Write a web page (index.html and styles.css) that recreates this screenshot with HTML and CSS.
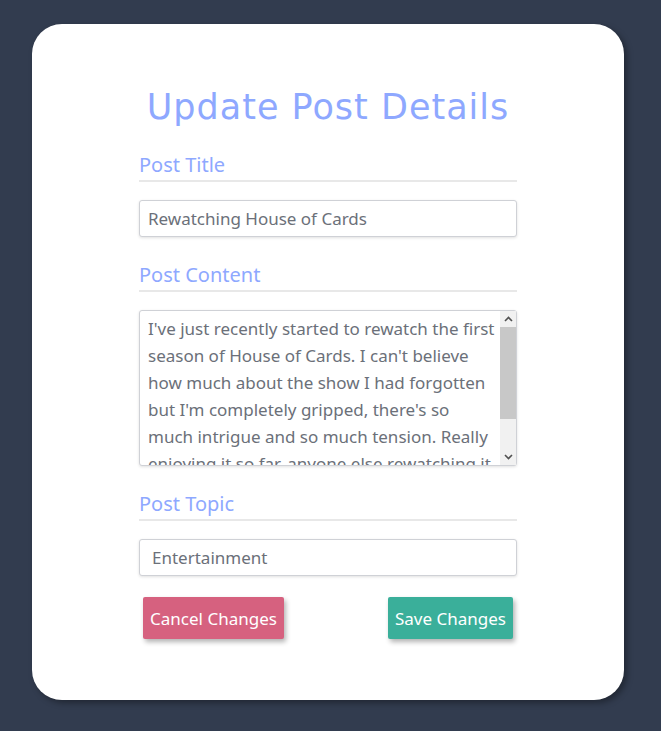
FILE: index.html
```html
<!DOCTYPE html>
<html>
<head>
<meta charset="utf-8">
<link rel="stylesheet" href="styles.css">
</head>
<body>
<div class="card">
  <h1 class="title">Update Post Details</h1>
  <form class="form">
    <label class="label">Post Title</label>
    <input class="field" type="text" value="Rewatching House of Cards">
    <label class="label">Post Content</label>
    <div class="area-wrap">
      <textarea class="area">I've just recently started to rewatch the first season of House of Cards. I can't believe how much about the show I had forgotten but I'm completely gripped, there's so much intrigue and so much tension. Really enjoying it so far, anyone else rewatching it at the moment? Let me know what you think!</textarea>
      <div class="scrollbar" aria-hidden="true">
        <div class="sb-btn">
          <svg width="9" height="6" viewBox="0 0 9 6"><path d="M1 5 L4.5 1.5 L8 5" fill="none" stroke="#505050" stroke-width="1.6"/></svg>
        </div>
        <div class="sb-track"><div class="sb-thumb"></div></div>
        <div class="sb-btn">
          <svg width="9" height="6" viewBox="0 0 9 6"><path d="M1 1 L4.5 4.5 L8 1" fill="none" stroke="#505050" stroke-width="1.6"/></svg>
        </div>
      </div>
    </div>
    <label class="label">Post Topic</label>
    <input class="field topic" type="text" value="Entertainment">
    <div class="actions">
      <button type="button" class="btn cancel">Cancel Changes</button>
      <button type="button" class="btn save">Save Changes</button>
    </div>
  </form>
</div>
</body>
</html>
```
FILE: styles.css
```css
html, body {
  margin: 0;
  padding: 0;
  background: #323c4f;
}
body {
  padding: 24px 0 0 32px;
  height: 731px;
  box-sizing: border-box;
}
.card {
  width: 592px;
  height: 676px;
  background: #fff;
  border-radius: 30px;
  box-shadow: 3px 3px 6px rgba(0,0,0,0.35);
  box-sizing: border-box;
  padding: 60px 107px 0 107px;
  font-family: "Noto Sans", "Open Sans", sans-serif;
}
.title {
  margin: 0 0 21px;
  text-align: center;
  font-family: "DejaVu Sans", sans-serif;
  font-weight: 400;
  font-size: 35px;
  letter-spacing: 1px;
  line-height: 46px;
  color: #8ea8ff;
  white-space: nowrap;
}
.form {
  display: flex;
  flex-direction: column;
}
.label {
  display: block;
  font-size: 20px;
  line-height: 28px;
  color: #8ea8ff;
  border-bottom: 2px solid #e8e8e8;
  padding-bottom: 1px;
  margin-bottom: 18px;
}
.field {
  display: block;
  box-sizing: border-box;
  width: 378px;
  height: 37px;
  border: 1px solid #cfd1d6;
  border-radius: 3px;
  box-shadow: 0 1px 3px rgba(0,0,0,0.12);
  padding: 0 8px;
  font-family: "Noto Sans", "Open Sans", sans-serif;
  font-size: 17px;
  color: #6b7079;
  margin-bottom: 24px;
  outline: none;
}
.topic {
  padding-left: 12px;
}
.area-wrap {
  position: relative;
  width: 378px;
  height: 156px;
  margin-bottom: 24px;
}
.area {
  display: block;
  box-sizing: border-box;
  width: 378px;
  height: 156px;
  border: 1px solid #cfd1d6;
  border-radius: 3px;
  box-shadow: 0 1px 3px rgba(0,0,0,0.12);
  padding: 4px 18px 4px 8px;
  font-family: "Noto Sans", "Open Sans", sans-serif;
  font-size: 17px;
  line-height: 27px;
  color: #6b7079;
  resize: none;
  overflow: hidden;
  outline: none;
}
.scrollbar {
  position: absolute;
  top: 1px;
  right: 1px;
  bottom: 1px;
  width: 16px;
  background: #f1f1f1;
  display: flex;
  flex-direction: column;
}
.sb-btn {
  height: 16px;
  display: flex;
  align-items: center;
  justify-content: center;
}
.sb-track {
  flex: 1;
}
.sb-thumb {
  height: 92px;
  background: #c8c8c8;
}
.actions {
  display: flex;
  justify-content: space-between;
  padding: 0 4px;
  margin-top: -3px;
}
.btn {
  height: 42px;
  border: none;
  border-radius: 2px;
  color: #fff;
  font-family: "Noto Sans", "Open Sans", sans-serif;
  font-size: 17px;
  padding: 0;
  white-space: nowrap;
  box-shadow: 2px 3px 5px rgba(0,0,0,0.3);
}
.cancel {
  background: #d6617f;
  width: 141px;
}
.save {
  background: #3aaf9a;
  width: 125px;
}
```
